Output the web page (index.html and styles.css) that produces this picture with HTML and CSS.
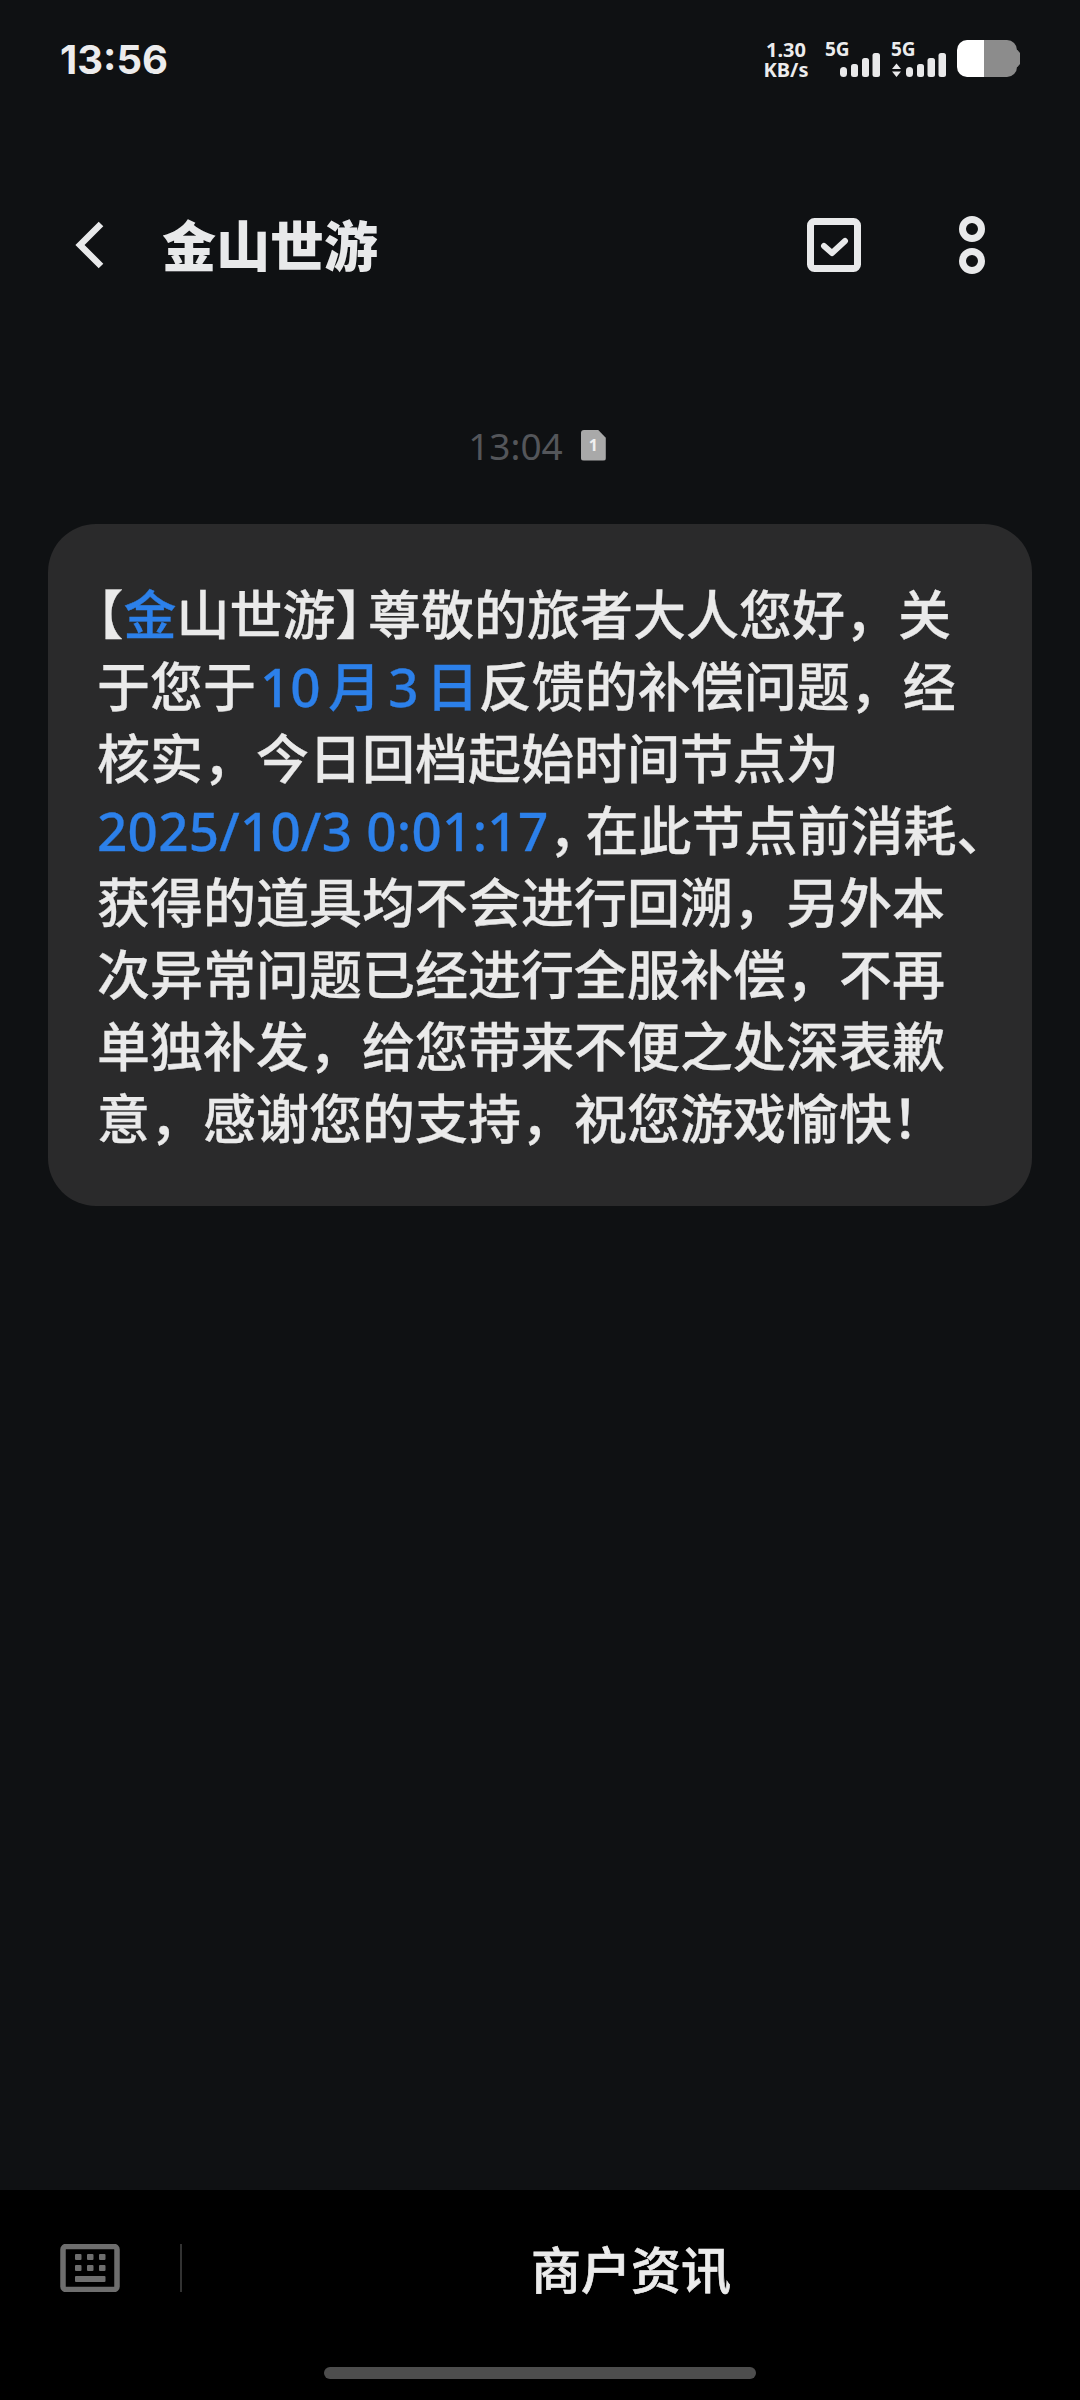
FILE: index.html
```html
<!DOCTYPE html>
<html lang="zh-CN">
<head>
<meta charset="utf-8">
<title>金山世游</title>
<link rel="stylesheet" href="styles.css">
</head>
<body>
<div class="screen">
  <div class="status">
    <div class="time">13:56</div>
    <div class="status-right">
      <div class="speed"><span>1.30</span><span>KB/s</span></div>
      <div class="net">
        <span class="g">5G</span>
        <svg class="sig" width="40" height="24" viewBox="0 0 40 24"><rect x="0" y="14" width="7" height="10" rx="3.500"/><rect x="11" y="11" width="7" height="13" rx="2.500"/><rect x="22" y="5" width="7" height="19" rx="2.500"/><rect x="32.500" y="0" width="7.500" height="24" rx="2.500"/></svg>
      </div>
      <div class="net">
        <span class="g">5G</span>
        <svg class="sig" width="55" height="24" viewBox="0 0 55 24"><path d="M5.500 10.500l4.500 5.500h-9zM5.500 24l4.500-5.500h-9z"/><rect x="15" y="14" width="7" height="10" rx="3.500"/><rect x="26" y="11" width="7" height="13" rx="2.500"/><rect x="36.500" y="5" width="7.500" height="19" rx="2.500"/><rect x="47.500" y="0" width="7.500" height="24" rx="2.500"/></svg>
      </div>
      <svg class="batt" width="63" height="37" viewBox="0 0 63 37"><defs><clipPath id="bc"><rect x="0" y="0" width="60" height="37" rx="10"/></clipPath></defs><g clip-path="url(#bc)"><rect width="27" height="37" fill="#fff"/><rect x="27" width="33" height="37" fill="#8c8c8c"/></g><path d="M58 10h2.500l2.500 3v11l-2.500 3H58z" fill="#8c8c8c"/></svg>
    </div>
  </div>

  <div class="header">
    <svg class="back" width="30" height="48" viewBox="0 0 30 48"><path d="M26 3L5 24l21 21" fill="none" stroke="#e8e9ea" stroke-width="6.500"/></svg>
    <div class="title">金山世游</div>
    <svg class="check" width="54" height="54" viewBox="0 0 54 54"><rect x="3.500" y="3.500" width="47" height="47" rx="4" fill="none" stroke="#e8e9ea" stroke-width="7"/><path d="M17 28l8 7 13-12" fill="none" stroke="#e8e9ea" stroke-width="6" stroke-linecap="round" stroke-linejoin="round"/></svg>
    <svg class="more" width="26" height="58" viewBox="0 0 26 58"><circle cx="13" cy="13" r="9.500" fill="none" stroke="#e8e9ea" stroke-width="7"/><circle cx="13" cy="45" r="9.500" fill="none" stroke="#e8e9ea" stroke-width="7"/></svg>
  </div>

  <div class="stamp">
    <span>13:04</span>
    <span class="sim">1</span>
  </div>

  <div class="bubble"><span class="br">【</span><a class="link">金</a>山世游<span class="br br-end">】</span>尊敬的旅者大人您好，关<br>于您于<a class="link date-short">10 月 3 日</a>反馈的补偿问题，经<br>核实，今日回档起始时间节点为<br><a class="link date-long">2025/10/3 0:01:17</a><span class="comma">，</span>在此节点前消耗、<br>获得的道具均不会进行回溯，另外本<br>次异常问题已经进行全服补偿，不再<br>单独补发，给您带来不便之处深表歉<br>意，感谢您的支持，祝您游戏愉快！</div>

  <div class="spacer"></div>

  <div class="footer">
    <div class="bar">
      <svg class="kbd" width="60" height="48" viewBox="0 0 60 48"><rect x="3" y="2.500" width="54" height="43" rx="3" fill="none" stroke="#6e6e6e" stroke-width="5.500"/><g fill="#6e6e6e"><rect x="15" y="10" width="6.500" height="6" rx="1"/><rect x="27" y="10" width="6.500" height="6" rx="1"/><rect x="39" y="10" width="6.500" height="6" rx="1"/><rect x="15" y="21" width="6.500" height="6" rx="1"/><rect x="27" y="21" width="6.500" height="6" rx="1"/><rect x="39" y="21" width="6.500" height="6" rx="1"/><rect x="15" y="32" width="30.500" height="6" rx="1"/></g></svg>
      <div class="divider"></div>
      <div class="merchant">商户资讯</div>
    </div>
    <div class="handle"></div>
  </div>
</div>
</body>
</html>
```
FILE: styles.css
```css
* { box-sizing: border-box; }
html, body { margin: 0; padding: 0; background: #0f1113; }
.screen {
  width: 1080px;
  height: 2400px;
  display: flex;
  flex-direction: column;
  overflow: hidden;
  color: #e9e9ea;
  font-family: "Noto Sans", "Noto Sans CJK SC", sans-serif;
}
.status {
  height: 120px;
  flex: none;
  display: flex;
  align-items: center;
  justify-content: space-between;
  padding: 0 60px;
}
.time {
  margin-top: -2px;
  font-family: Inter, "Noto Sans", sans-serif;
  font-weight: 700;
  font-size: 40px;
  color: #ececed;
}
.status-right {
  display: flex;
  align-items: flex-start;
  height: 40px;
}
.speed {
  display: flex;
  flex-direction: column;
  align-items: center;
  width: 46px;
  font-weight: 700;
  font-size: 20px;
  line-height: 20px;
  margin: 0 16px 0 0;
  color: #ececed;
}
.net { position: relative; width: 56px; height: 37px; margin-right: 10px; }
.net .g {
  display: block;
  font-weight: 700;
  font-size: 19px;
  line-height: 16px;
  margin-top: 1px;
  color: #ececed;
}
.sig { display: block; position: absolute; right: 1px; bottom: 0; fill: #e9e9ea; }
.batt { display: block; }
.header {
  height: 250px;
  flex: none;
  display: flex;
  align-items: center;
  padding: 0 95px 0 75px;
}
.back { flex: none; }
.title {
  flex: 1;
  margin: -2px 0 0 57px;
  font-weight: 900;
  font-size: 54px;
  line-height: 60px;
  font-family: "Noto Sans CJK SC", sans-serif;
  color: #e8e9ea;
}
.check { flex: none; margin-right: 98px; }
.more { flex: none; }
.stamp {
  height: 60px;
  margin-top: 45px;
  flex: none;
  display: flex;
  align-items: center;
  justify-content: center;
  gap: 18px;
  padding-right: 6px;
  font-size: 37px;
  color: #54565a;
}
.sim {
  width: 25px;
  height: 31px;
  background: #a9a9a9;
  border-radius: 3px;
  clip-path: polygon(0 0, 68% 0, 100% 27%, 100% 100%, 0 100%);
  color: #f0f0f0;
  font-size: 16px;
  font-weight: 700;
  line-height: 31px;
  text-align: center;
}
.bubble {
  margin: 49px 48px 0;
  height: 682px;
  padding: 52px 0 0 49px;
  background: #2a2a2b;
  border-radius: 48px;
  font-family: "Noto Sans", "Noto Sans CJK SC", sans-serif;
  font-size: 53px;
  font-weight: 500;
  line-height: 72px;
  white-space: nowrap;
  color: #eaeaea;
  -webkit-text-stroke: 0.3px currentColor;
}
.link { color: #2c80ea; }
.date-short { margin-left: 4px; word-spacing: -6.5px; }
.date-long { letter-spacing: 0.25px; }
.comma { letter-spacing: -16px; }
.br { font-family: "Noto Sans CJK SC", sans-serif; font-feature-settings: "halt"; }
.br-end { margin-right: 6px; }
.spacer { flex: 1; }
.footer {
  flex: none;
  height: 210px;
  background: #000;
  display: flex;
  flex-direction: column;
  align-items: center;
}
.bar {
  width: 100%;
  height: 177px;
  display: flex;
  align-items: flex-start;
  padding: 54px 0 0 60px;
}
.kbd { flex: none; }
.divider { flex: none; width: 2px; height: 48px; margin-left: 60px; background: #323232; }
.merchant {
  flex: 1;
  margin-top: -13px;
  text-align: center;
  font-family: "Noto Sans CJK SC", sans-serif;
  font-size: 50px;
  line-height: 72px;
  font-weight: 500;
  color: #ebebeb;
  -webkit-text-stroke: 0.7px currentColor;
}
.handle { width: 432px; height: 12px; border-radius: 6px; background: #4d4d4d; }
```
